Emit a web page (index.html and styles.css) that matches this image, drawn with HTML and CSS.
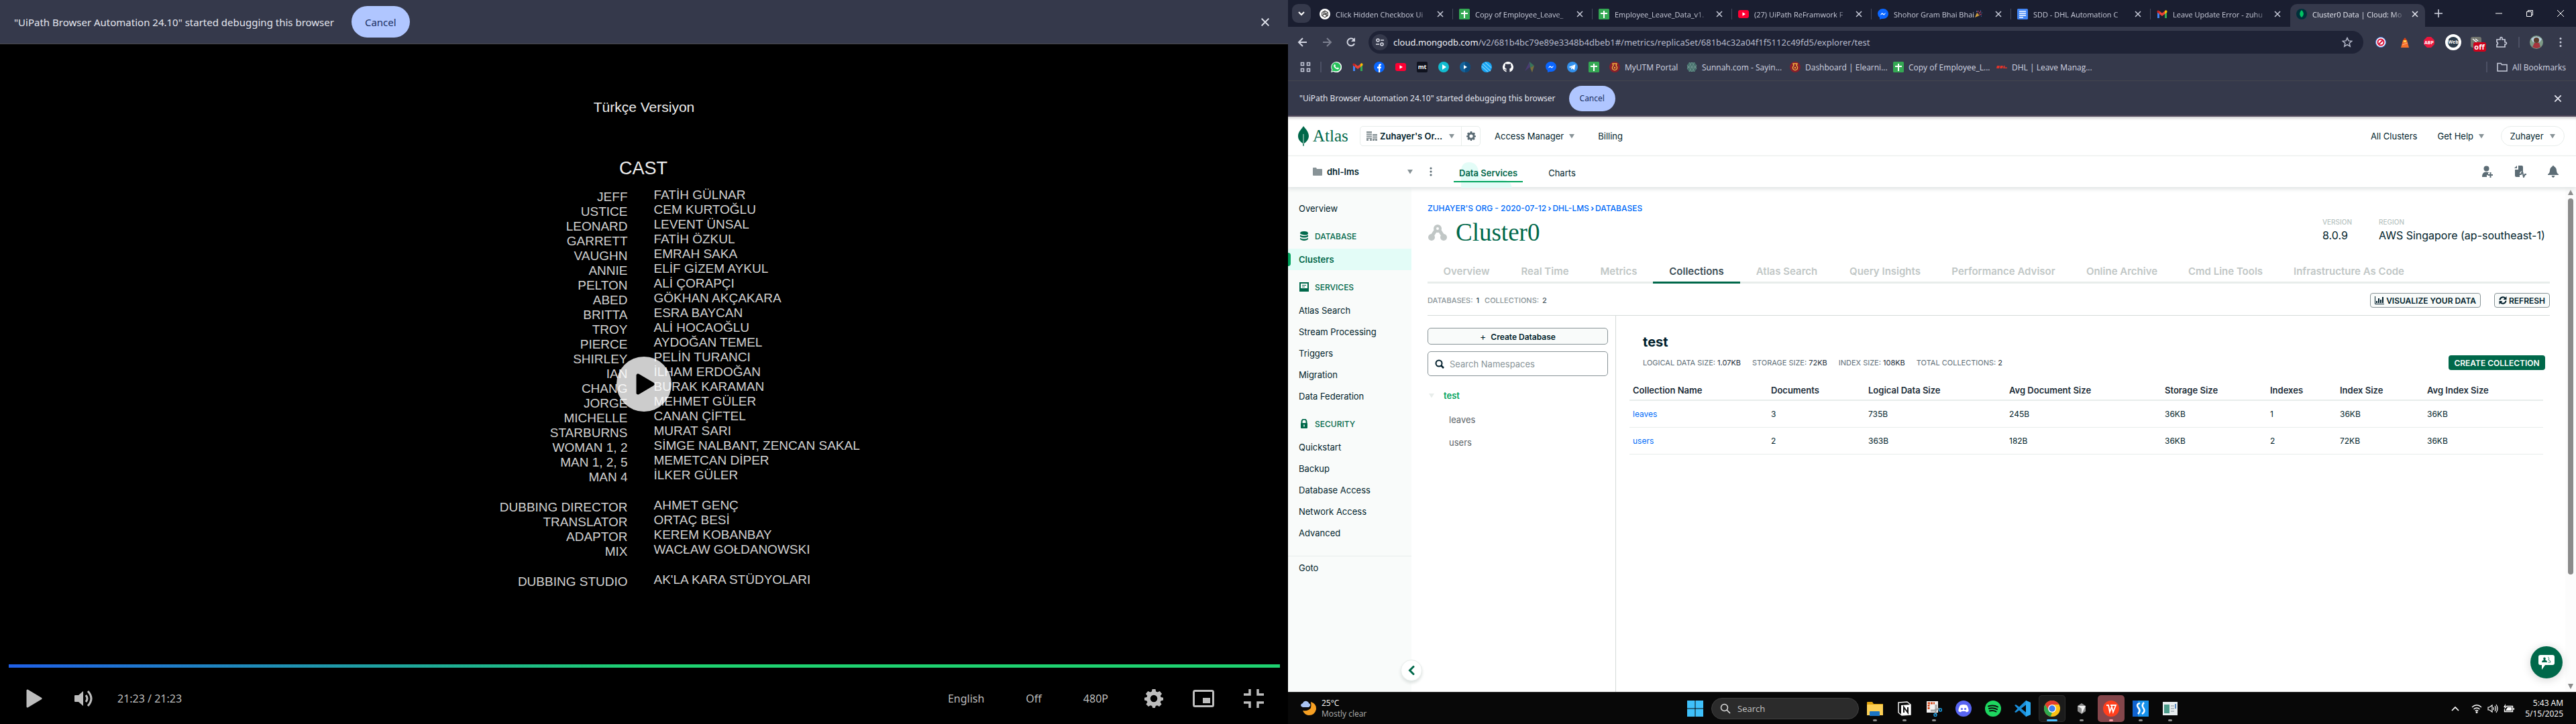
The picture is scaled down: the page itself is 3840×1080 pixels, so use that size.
FILE: index.html
```html
<!DOCTYPE html>
<html lang="en">
<head>
<meta charset="utf-8">
<title>Cluster0 Data | Cloud: MongoDB Cloud</title>
<link rel="stylesheet" href="styles.css">
</head>
<body>
<svg class="defs" aria-hidden="true">
  <symbol id="x" viewBox="0 0 12 12"><path d="M2 2l8 8M10 2l-8 8" fill="none" stroke="currentColor" stroke-width="1.5"/></symbol>
  <symbol id="caret" viewBox="0 0 10 8"><path d="M1 1h8L5 7.500z" fill="currentColor"/></symbol>
  <symbol id="sheet" viewBox="0 0 16 16"><rect width="16" height="16" rx="1.500" fill="#34a853"/><path d="M8 3v11M3 7h10" stroke="#fff" stroke-width="2"/></symbol>
  <symbol id="yt" viewBox="0 0 16 16"><rect y="2" width="16" height="12" rx="3" fill="#ff0033"/><path d="M6.500 5.300v5.400L11 8z" fill="#fff"/></symbol>
  <symbol id="msg" viewBox="0 0 16 16"><path d="M8 0c4.500 0 8 3.200 8 7.600s-3.500 7.500-8 7.500l-2-.2L3 16v-2.700A7.400 7.400 0 010 7.600C0 3.200 3.500 0 8 0z" fill="#0a66ff"/><path d="M3.500 9.700L6.500 6l2.500 2 3.500-2.200-3 4L7 8z" fill="#fff"/></symbol>
  <symbol id="gmail" viewBox="0 0 16 16"><path d="M1 4v10h3V7z" fill="#4285f4"/><path d="M15 4v10h-3V7z" fill="#34a853"/><path d="M12 3.500V8l3.500-2.700V4c0-1.800-2-2.500-3.500-.9z" fill="#fbbc04"/><path d="M4 3.500L8 6.500l4-3V8l-4 3-4-3z" fill="#ea4335"/><path d="M.5 5.300L4 8V3.400C2.500 1.600.5 2.500.5 4z" fill="#c5221f"/></symbol>
  <symbol id="utm" viewBox="0 0 16 16"><circle cx="8" cy="8" r="8" fill="#8a1f2b"/><path d="M5 3h6L10 6a3.600 3.600 0 11-4 0z" fill="none" stroke="#f3b63f" stroke-width="1.400"/><circle cx="8" cy="9" r="1.200" fill="#f3b63f"/></symbol>
  <symbol id="gear" viewBox="0 0 16 16"><path fill-rule="evenodd" fill="currentColor" d="M6.600 0h2.800l.4 2 1.300.6L13 1.700 14.900 4 13.600 5.600l.4 1.200 2 .5v2.100l-2 .6-.5 1.200 1.100 1.700-2 2-1.700-1.100-1.300.5-.6 1.700H7l-.6-1.700-1.300-.5-1.700 1.100-2-2 1.100-1.700L2 10l-2-.6V7.300l2-.5.4-1.200L1.100 4 3 1.700l1.900.9L6.200 2zM8 5a3 3 0 100 6 3 3 0 000-6z"/></symbol>
</svg>

<main class="screens">
<section class="player" aria-label="Video player">
  <div class="infobar infobar-lg">
    <span>"UiPath Browser Automation 24.10" started debugging this browser</span>
    <button class="pill">Cancel</button>
    <button class="plain push" aria-label="Close"><svg width="16" height="16"><use href="#x"/></svg></button>
  </div>
  <div class="stage">
    <p class="version">Türkçe Versiyon</p>
    <h1 class="cast">CAST</h1>
    <div class="credits">
      <ul class="roles">
        <li>JEFF</li><li>USTICE</li><li>LEONARD</li><li>GARRETT</li><li>VAUGHN</li><li>ANNIE</li><li>PELTON</li><li>ABED</li><li>BRITTA</li><li>TROY</li><li>PIERCE</li><li>SHIRLEY</li><li>IAN</li><li>CHANG</li><li>JORGE</li><li>MICHELLE</li><li>STARBURNS</li><li>WOMAN 1, 2</li><li>MAN 1, 2, 5</li><li>MAN 4</li>
        <li class="break">DUBBING DIRECTOR</li><li>TRANSLATOR</li><li>ADAPTOR</li><li>MIX</li>
        <li class="break">DUBBING STUDIO</li>
      </ul>
      <ul>
        <li>FATİH GÜLNAR</li><li>CEM KURTOĞLU</li><li>LEVENT ÜNSAL</li><li>FATİH ÖZKUL</li><li>EMRAH SAKA</li><li>ELİF GİZEM AYKUL</li><li>ALİ ÇORAPÇI</li><li>GÖKHAN AKÇAKARA</li><li>ESRA BAYCAN</li><li>ALİ HOCAOĞLU</li><li>AYDOĞAN TEMEL</li><li>PELİN TURANCI</li><li>İLHAM ERDOĞAN</li><li>BURAK KARAMAN</li><li>MEHMET GÜLER</li><li>CANAN ÇİFTEL</li><li>MURAT SARI</li><li>SİMGE NALBANT, ZENCAN SAKAL</li><li>MEMETCAN DİPER</li><li>İLKER GÜLER</li>
        <li class="break">AHMET GENÇ</li><li>ORTAÇ BESİ</li><li>KEREM KOBANBAY</li><li>WACŁAW GOŁDANOWSKI</li>
        <li class="break">AK'LA KARA STÜDYOLARI</li>
      </ul>
    </div>
    <button class="bigplay" aria-label="Play"><svg width="28" height="32" viewBox="0 0 28 32"><path d="M3 3v26l22-13z" stroke="#000" stroke-width="5" stroke-linejoin="round"/></svg></button>
  </div>
  <input class="seek" type="range" min="0" max="100" value="100" aria-label="Seek">
  <div class="controls">
    <button class="plain" aria-label="Play"><svg width="24" height="28" viewBox="0 0 24 28"><path d="M2 2v24l20-12z" fill="currentColor" stroke="currentColor" stroke-width="3" stroke-linejoin="round"/></svg></button>
    <button class="plain" aria-label="Volume"><svg width="28" height="26" viewBox="0 0 28 26"><path d="M0 9v8q0 1 1 1h5l7 6V2L6 8H1Q0 8 0 9z" fill="currentColor"/><path d="M17 8q4 5 0 10M20 2q10 11 0 22" fill="none" stroke="currentColor" stroke-width="3"/></svg></button>
    <span>21:23 / 21:23</span>
    <div class="options push">
      <button class="plain">English</button>
      <button class="plain">Off</button>
      <button class="plain">480P</button>
      <button class="plain" aria-label="Settings"><svg width="28" height="28"><use href="#gear"/></svg></button>
      <button class="plain" aria-label="Picture in picture"><svg width="32" height="28" viewBox="0 0 32 28"><rect x="1.500" y="2.500" width="29" height="23" rx="2" fill="none" stroke="currentColor" stroke-width="3"/><path d="M15 13h11v8H15z" fill="currentColor"/></svg></button>
      <button class="plain" aria-label="Exit full screen"><svg width="30" height="28" viewBox="0 0 30 28"><path d="M9 0v8H0M21 0v8h9M9 28v-8H0M21 28v-8h9" fill="none" stroke="currentColor" stroke-width="3.500"/></svg></button>
    </div>
  </div>
</section>

<section class="desktop">
  <div class="tabstrip">
    <button class="tabsearch" aria-label="Search tabs"><svg width="12" height="12" viewBox="0 0 12 12"><path d="M2 4l4 4 4-4" fill="none" stroke="currentColor" stroke-width="2"/></svg></button>
    <div class="tab"><svg width="16" height="16" viewBox="0 0 16 16"><circle cx="8" cy="8" r="8" fill="#fff"/><path d="M8 3l4.300 2.500v5L8 13l-4.300-2.500v-5zM8 3v5l4.300 2.500M3.700 10.500L8 8M12.300 5.500L8 8M6 4v5M10 7v5" fill="none" stroke="#222"/></svg><span>Click Hidden Checkbox Ui</span><button class="plain" aria-label="Close tab"><svg width="12" height="12"><use href="#x"/></svg></button></div>
    <div class="tab"><svg width="16" height="16"><use href="#sheet"/></svg><span>Copy of Employee_Leave_</span><button class="plain" aria-label="Close tab"><svg width="12" height="12"><use href="#x"/></svg></button></div>
    <div class="tab"><svg width="16" height="16"><use href="#sheet"/></svg><span>Employee_Leave_Data_v1.</span><button class="plain" aria-label="Close tab"><svg width="12" height="12"><use href="#x"/></svg></button></div>
    <div class="tab"><svg width="16" height="16"><use href="#yt"/></svg><span>(27) UiPath ReFramwork F</span><button class="plain" aria-label="Close tab"><svg width="12" height="12"><use href="#x"/></svg></button></div>
    <div class="tab"><svg width="16" height="16"><use href="#msg"/></svg><span>Shohor Gram Bhai Bhai<svg class="party" width="12" height="12" viewBox="0 0 12 12"><path d="M1 11l3-7 4 4z" fill="#f4b740"/><path d="M5 3l1-2M7 5l3-3M8 7l3-1" stroke="#ef4f7a" stroke-width="1.500"/><path d="M9 1h1M11 4h1M3 2h1M10 9h1" stroke="#4aa8ff" stroke-width="1.500"/></svg></span><button class="plain" aria-label="Close tab"><svg width="12" height="12"><use href="#x"/></svg></button></div>
    <div class="tab"><svg width="16" height="16" viewBox="0 0 16 16"><rect width="16" height="16" rx="1.500" fill="#4285f4"/><path d="M3 4h10M3 7h10M3 10h10M3 13h6" stroke="#fff" stroke-width="1.500"/></svg><span>SDD - DHL Automation C</span><button class="plain" aria-label="Close tab"><svg width="12" height="12"><use href="#x"/></svg></button></div>
    <div class="tab"><svg width="16" height="16"><use href="#gmail"/></svg><span>Leave Update Error - zuhu</span><button class="plain" aria-label="Close tab"><svg width="12" height="12"><use href="#x"/></svg></button></div>
    <div class="tab active"><svg width="16" height="16" viewBox="0 0 16 16"><circle cx="8" cy="8" r="8" fill="#00303a"/><path d="M8 2c4 4 3.500 8 0 11-3.500-3-4-7 0-11z" fill="#00c463"/></svg><span>Cluster0 Data | Cloud: Mo</span><button class="plain" aria-label="Close tab"><svg width="12" height="12"><use href="#x"/></svg></button></div>
    <button class="plain newtab" aria-label="New tab"><svg width="14" height="14" viewBox="0 0 14 14"><path d="M7 1v12M1 7h12" stroke="currentColor" stroke-width="1.500"/></svg></button>
    <div class="winbtns push">
      <button class="plain" aria-label="Minimize"><svg width="12" height="12" viewBox="0 0 12 12"><path d="M1 6h10" stroke="#fff"/></svg></button>
      <button class="plain" aria-label="Restore"><svg width="12" height="12" viewBox="0 0 12 12"><path d="M1.500 3.500h7v7h-7zM3.500 3V1.500h7v7H9" fill="none" stroke="#fff"/></svg></button>
      <button class="plain" aria-label="Close"><svg width="12" height="12" viewBox="0 0 12 12"><path d="M1 1l10 10M11 1L1 11" stroke="#fff"/></svg></button>
    </div>
  </div>

  <div class="toolbar">
    <button class="plain" aria-label="Back"><svg width="16" height="16" viewBox="0 0 16 16"><path d="M14 8H2M8 2L2 8l6 6" fill="none" stroke="currentColor" stroke-width="2"/></svg></button>
    <button class="plain dim" aria-label="Forward"><svg width="16" height="16" viewBox="0 0 16 16"><path d="M2 8h12M8 2l6 6-6 6" fill="none" stroke="currentColor" stroke-width="2"/></svg></button>
    <button class="plain" aria-label="Reload"><svg width="16" height="16" viewBox="0 0 16 16"><path d="M13 10a5.500 5.500 0 11-1-6" fill="none" stroke="currentColor" stroke-width="2"/><path d="M14 1v6H8z" fill="currentColor"/></svg></button>
    <div class="omnibox">
      <button class="site" aria-label="View site information"><svg width="14" height="14" viewBox="0 0 14 14"><g fill="none" stroke="currentColor" stroke-width="1.500"><circle cx="4" cy="4" r="2"/><path d="M8 4h5M1 10h5"/><circle cx="10" cy="10" r="2"/></g></svg></button>
      <span><b>cloud.mongodb.com</b>/v2/681b4bc79e89e3348b4dbeb1#/metrics/replicaSet/681b4c32a04f1f5112c49fd5/explorer/test</span>
      <button class="plain push" aria-label="Bookmark this tab"><svg width="16" height="16" viewBox="0 0 16 16"><path d="M8 1.500l2 4.400 4.700.4-3.600 3.100 1.100 4.700L8 11.600l-4.200 2.500 1.100-4.700L1.300 6.300 6 5.900z" fill="none" stroke="currentColor" stroke-width="1.500"/></svg></button>
    </div>
    <div class="exts">
      <svg width="16" height="16" viewBox="0 0 16 16"><circle cx="8" cy="8" r="7.500" fill="#fff" stroke="#4b7bd8"/><circle cx="8" cy="8" r="4.500" fill="none" stroke="#d8123a" stroke-width="2"/><path d="M11 5l-6 6" stroke="#d8123a" stroke-width="2"/></svg>
      <svg width="16" height="16" viewBox="0 0 16 16"><path d="M5 5h6l3 11H2z" fill="#f4702a"/><path d="M5 5l3-4 3 4z" fill="#d84315"/><path d="M6 5h4v3H6z" fill="#ffd54f"/><path d="M4 12l8-3" stroke="#ffb48a"/></svg>
      <svg width="18" height="18" viewBox="0 0 18 18"><path d="M6 1h6l5 5v6l-5 5H6l-5-5V6z" fill="#e9173d"/><text x="9" y="12" text-anchor="middle" class="abp">ABP</text></svg>
      <svg width="24" height="24" viewBox="0 0 24 24"><circle cx="12" cy="12" r="12" fill="#fff"/><circle cx="12" cy="12" r="8" fill="#2c3b4a"/><text x="12" y="14" text-anchor="middle" class="abp">Web</text></svg>
      <svg class="badged" width="24" height="24" viewBox="0 0 24 24"><rect x="2" y="4" width="16" height="16" rx="3" fill="#74766f"/><path d="M5 7l6 5M9 7l4 3" stroke="#fff" stroke-width="1.500"/><rect x="6" y="12" width="19" height="14" rx="3" fill="#d0021b"/><text x="15" y="23" text-anchor="middle" class="off">off</text></svg>
      <svg width="18" height="18" viewBox="0 0 18 18"><path d="M2 5h5V3a1.500 1.500 0 013 0v2h4v4h1a1.500 1.500 0 010 3h-1v4H2v-3.500q3-1.500 0-4z" fill="none" stroke="#c7cbda" stroke-width="1.700"/></svg>
      <i class="vbar"></i>
      <svg width="20" height="20" viewBox="0 0 20 20"><circle cx="10" cy="10" r="10" fill="#7d9a86"/><path d="M2 5q8-7 16 0l-3 5H5z" fill="#b9cfe0"/><circle cx="10" cy="7" r="4" fill="#5a3b2c"/><path d="M4 17l3-6h7l2 6q-6 4-12 0z" fill="#a5353e"/></svg>
      <svg width="16" height="16" viewBox="0 0 16 16" fill="#c7cbda"><circle cx="8" cy="2.500" r="1.500"/><circle cx="8" cy="8" r="1.500"/><circle cx="8" cy="13.500" r="1.500"/></svg>
    </div>
  </div>

  <nav class="bookmarks">
    <svg width="16" height="16" viewBox="0 0 16 16"><path d="M1.500 1.500h4v4h-4zM10.500 1.500h4v4h-4zM1.500 10.500h4v4h-4zM10.500 10.500h4v4h-4z" fill="none" stroke="#c7cbda" stroke-width="1.500"/></svg>
    <i class="vbar"></i>
    <div class="marks">
      <svg width="16" height="16" viewBox="0 0 16 16"><path d="M0 16l1.200-4A8 8 0 114 14.900z" fill="#fff"/><path d="M1.500 14.500l.8-2.800a6.700 6.700 0 112.200 2z" fill="#25c25a"/><path d="M5 4.500c1-1 1.500 0 2 1.500l-.7 1q1 1.800 2.700 2.500l1-1 2 1c0 3-4 2-6 0s-2.500-4-1-5z" fill="#fff"/></svg>
      <svg width="16" height="16"><use href="#gmail"/></svg>
      <svg width="16" height="16" viewBox="0 0 16 16"><circle cx="8" cy="8" r="8" fill="#0866ff"/><path d="M7 16v-6H5V7.500h2V6c0-2.200 1.500-3 4-2.600v2c-1.500-.1-1.800.2-1.800 1v1.100H11L10.600 10H9.200v6z" fill="#fff"/></svg>
      <svg width="16" height="16"><use href="#yt"/></svg>
      <svg width="16" height="16" viewBox="0 0 16 16"><rect width="16" height="16" rx="2" fill="#10131f"/><text x="8" y="11" text-anchor="middle" class="mt">mt</text></svg>
      <svg width="16" height="16" viewBox="0 0 16 16"><circle cx="8" cy="8" r="8" fill="#12bcd0"/><path d="M6 4v8l6-4z" fill="#fff"/></svg>
      <svg width="16" height="16" viewBox="0 0 16 16"><circle cx="8" cy="8" r="8" fill="#14639b"/><path d="M8 0a8 8 0 010 16z" fill="#0b4b7e"/><path d="M6 5v6l5-3z" fill="#fff"/></svg>
      <svg width="16" height="16" viewBox="0 0 16 16"><circle cx="8" cy="8" r="8" fill="#16a4f4"/><path d="M2 3l12 11M1 7l9 8M6 1l9 8" stroke="#7fd0fa" stroke-width="1.200"/></svg>
      <svg width="16" height="16" viewBox="0 0 16 16"><path d="M8 0a8 8 0 00-2.500 15.600v-2.700C3 13.300 3 11.500 2 11c1.500-.3 2 1.300 3.500 1 .1-.5.3-.9.500-1.200C3 10.300 2.500 7 4 5.100c-.2-.5-.2-1.300.1-2.100.8 0 1.500.4 2.100.8a8 8 0 013.600 0c.7-.5 1.300-.8 2.100-.8.300.8.300 1.600.1 2.100C13.500 7 13 10.300 10 10.800c.400.400.5 1 .5 1.700v3.100A8 8 0 008 0z" fill="#fff"/></svg>
      <svg width="16" height="16" viewBox="0 0 16 16"><path d="M1 14L8 0l1 8z" fill="#4a3a72"/><path d="M8 0l7 6-6 3z" fill="#39745a"/><path d="M15 6l-3 10-3-7z" fill="#77703c"/></svg>
      <svg width="16" height="16"><use href="#msg"/></svg>
      <svg width="16" height="16" viewBox="0 0 16 16"><circle cx="8" cy="8" r="8" fill="#3390ec"/><path d="M2.500 8L12.500 4 11 12.500 7.500 10 6 12V9l4-3-5 3z" fill="#fff"/></svg>
      <svg width="16" height="16"><use href="#sheet"/></svg>
    </div>
    <div class="named">
      <a href="#"><svg width="16" height="16"><use href="#utm"/></svg>MyUTM Portal</a>
      <a href="#"><svg width="16" height="16" viewBox="0 0 16 16"><path d="M4 1h8l3 4v6l-3 4H4l-3-4V5z" fill="#456f6b"/><path d="M4 1l8 14M12 1L4 15M1 8h14M1 5l7 10 7-10M1 11L8 1l7 10" stroke="#83a39d" fill="none" stroke-width=".6"/></svg>Sunnah.com - Sayin...</a>
      <a href="#"><svg width="16" height="16"><use href="#utm"/></svg>Dashboard | Elearni...</a>
      <a href="#"><svg width="16" height="16"><use href="#sheet"/></svg>Copy of Employee_L...</a>
      <a href="#"><svg width="16" height="16" viewBox="0 0 16 16"><path d="M1 6h4l-1 4H0zM6 6h4l-1 4H5zM11 6h2l-1 2.500h4V10h-6z" fill="#e0342b"/></svg>DHL | Leave Manag...</a>
    </div>
    <i class="vbar push"></i>
    <a class="all" href="#"><svg width="16" height="16" viewBox="0 0 16 16"><path d="M1 2.500h5l1.500 2H15v9.500H1z" fill="none" stroke="#c7cbda" stroke-width="1.500"/></svg>All Bookmarks</a>
  </nav>

  <div class="infobar">
    <span>"UiPath Browser Automation 24.10" started debugging this browser</span>
    <button class="pill">Cancel</button>
    <button class="plain push" aria-label="Close"><svg width="14" height="14"><use href="#x"/></svg></button>
  </div>

  <div class="atlas">
    <header class="top">
      <a class="logo" href="#"><svg width="16" height="30" viewBox="0 0 16 30"><path d="M8 0c2 3 8 8 8 15 0 5-4 9-7 11l-.5 4h-1L7 26C3 23 0 20 0 15 0 8 6 4 8 0z" fill="#00684a"/><path d="M8 12v15" stroke="#fff" stroke-width=".8"/></svg>Atlas</a>
      <div class="org">
        <button class="orgname"><svg width="16" height="14" viewBox="0 0 16 14"><path d="M0 0h8v14H5v-3H3v3H0zM9 4h7v10h-3v-2h-1v2H9z" fill="#889397"/><path d="M0 3h8M0 6h8M0 9h8M9 7h7M9 10h7" stroke="#fff"/></svg><b>Zuhayer's Or...</b><svg class="car" width="10" height="8"><use href="#caret"/></svg></button>
        <button class="orgset" aria-label="Organization settings"><svg width="14" height="14"><use href="#gear"/></svg></button>
      </div>
      <button class="plain drop">Access Manager<svg class="car" width="10" height="8"><use href="#caret"/></svg></button>
      <a href="#">Billing</a>
      <div class="account push">
        <a href="#">All Clusters</a>
        <button class="plain drop">Get Help<svg class="car" width="10" height="8"><use href="#caret"/></svg></button>
        <button class="user">Zuhayer<svg class="car" width="10" height="8"><use href="#caret"/></svg></button>
      </div>
    </header>
    <div class="project">
      <button class="plain projname"><svg width="14" height="12" viewBox="0 0 14 12"><path d="M0 1q0-1 1-1h4l1 2h7q1 0 1 1v8q0 1-1 1H1q-1 0-1-1z" fill="#889397"/></svg><b>dhl-lms</b><svg class="car push" width="10" height="8"><use href="#caret"/></svg></button>
      <button class="plain kebab" aria-label="Project options"><svg width="4" height="14" viewBox="0 0 4 14" fill="#5c6c75"><circle cx="2" cy="2" r="1.600"/><circle cx="2" cy="7" r="1.600"/><circle cx="2" cy="12" r="1.600"/></svg></button>
      <a class="svc on" href="#"><svg class="blob" width="76" height="38" viewBox="0 0 76 38"><path d="M0 38V12Q1 0 12 0q12 0 14 14 2 12 16 12h20q12 1 14 12z" fill="#e3fcf7"/></svg><span>Data Services</span></a>
      <a class="svc" href="#">Charts</a>
      <div class="acts push">
        <button class="plain" aria-label="Invite"><svg width="16" height="18" viewBox="0 0 16 18" fill="#5c6c75"><circle cx="6.500" cy="4.500" r="4"/><path d="M0 17q0-8 6.500-7.500 3 0 4.500 1.500H9v3H7v3z"/><path d="M12.500 10v8M8.500 14h7.500" stroke="#5c6c75" stroke-width="2"/></svg></button>
        <button class="plain" aria-label="Activity"><svg width="18" height="18" viewBox="0 0 18 18"><path d="M6 0h5q2 0 2 2v6q-5 0-5 5v4H3q-2 0-2-2V6h5z" fill="#5c6c75"/><path d="M4 0v4H0z" fill="#5c6c75"/><path d="M8 13h2l2-4 2 8 2-4h2" stroke="#5c6c75" stroke-width="2" fill="none"/></svg></button>
        <button class="plain" aria-label="Notifications"><svg width="16" height="18" viewBox="0 0 16 18"><path d="M8 0q1.500 0 1.500 1.500Q13 3 13 8q0 3 3 5v1H0v-1q3-2 3-5 0-5 3.500-6.500Q6.500 0 8 0zM5.500 15h5q-1 3-2.500 3t-2.500-3z" fill="#5c6c75"/></svg></button>
      </div>
    </div>

    <div class="body">
      <nav class="side">
        <a href="#">Overview</a>
        <h3><svg width="14" height="14" viewBox="0 0 14 14" fill="#00684a"><path d="M1 3q0-3 6-3t6 3-6 2.500S1 4.500 1 3zM1 5.500q6 3 12 0V8q-6 3-12 0zM1 10q6 3 12 0v2q-6 4-12 0z"/></svg>DATABASE</h3>
        <a class="on" href="#">Clusters</a>
        <h3><svg width="14" height="14" viewBox="0 0 14 14"><path d="M1 1h12v9H1z" fill="none" stroke="#00684a" stroke-width="2"/><path d="M0 11h14v3H0zM4 4h6v1H4zM4 6.500h4v1H4z" fill="#00684a"/></svg>SERVICES</h3>
        <a href="#">Atlas Search</a>
        <a href="#">Stream Processing</a>
        <a href="#">Triggers</a>
        <a href="#">Migration</a>
        <a href="#">Data Federation</a>
        <h3><svg width="14" height="14" viewBox="0 0 14 14"><path d="M3.500 7V4a3.500 3.500 0 017 0v3" fill="none" stroke="#00684a" stroke-width="2"/><rect x="2" y="6" width="10" height="8" rx="1" fill="#00684a"/><path d="M7 8.500v3" stroke="#fff" stroke-width="1.500"/></svg>SECURITY</h3>
        <a href="#">Quickstart</a>
        <a href="#">Backup</a>
        <a href="#">Database Access</a>
        <a href="#">Network Access</a>
        <a href="#">Advanced</a>
        <hr>
        <a href="#">Goto</a>
        <button class="collapse" aria-label="Collapse navigation"><svg width="10" height="14" viewBox="0 0 10 14"><path d="M8 1.500L2.500 7 8 12.500" fill="none" stroke="#00684a" stroke-width="3" stroke-linecap="round"/></svg></button>
      </nav>

      <div class="content">
        <div class="crumbs"><a href="#">ZUHAYER'S ORG - 2020-07-12</a><a href="#">DHL-LMS</a><a href="#">DATABASES</a></div>
        <div class="head">
          <svg width="30" height="24" viewBox="0 0 30 24" fill="none" stroke="#c1c7c6"><circle cx="15" cy="6" r="4" stroke-width="4"/><path d="M12 9L6 18M18 9l6 9" stroke-width="5"/><circle cx="6" cy="19" r="5" fill="#c1c7c6" stroke="none"/><circle cx="24" cy="19" r="5" fill="#c1c7c6" stroke="none"/></svg>
          <h2>Cluster0</h2>
          <dl class="ver push"><dt>VERSION</dt><dd>8.0.9</dd></dl>
          <dl class="reg"><dt>REGION</dt><dd>AWS Singapore (ap-southeast-1)</dd></dl>
        </div>
        <nav class="tabs">
          <a href="#">Overview</a><a href="#">Real Time</a><a href="#">Metrics</a><a class="on" href="#">Collections</a><a href="#">Atlas Search</a><a href="#">Query Insights</a><a href="#">Performance Advisor</a><a href="#">Online Archive</a><a href="#">Cmd Line Tools</a><a href="#">Infrastructure As Code</a>
        </nav>
        <div class="summary">
          <span>DATABASES: <b>1</b></span><span>COLLECTIONS: <b>2</b></span>
          <button class="btn push"><svg width="14" height="12" viewBox="0 0 14 12"><path d="M.5 0v11.500H14" fill="none" stroke="#001e2b"/><path d="M3 10V7M6 10V3M9 10V5M12 10V1" stroke="#001e2b" stroke-width="2"/></svg>VISUALIZE YOUR DATA</button>
          <button class="btn"><svg width="12" height="12" viewBox="0 0 12 12"><path d="M1.500 5.500A4.500 4.500 0 019.500 3M10.500 6.500A4.500 4.500 0 012.500 9" fill="none" stroke="#001e2b" stroke-width="2"/><path d="M11.500 0v5h-5zM.5 12V7h5z" fill="#001e2b"/></svg>REFRESH</button>
        </div>
        <div class="split">
          <aside class="dbs">
            <button class="create"><span>+</span> Create Database</button>
            <label class="search"><svg width="16" height="14" viewBox="0 0 16 14"><circle cx="7" cy="6" r="4.500" fill="none" stroke="#001e2b" stroke-width="2"/><path d="M10 9l4 4" stroke="#001e2b" stroke-width="2.500"/></svg><input type="text" placeholder="Search Namespaces" aria-label="Search Namespaces"></label>
            <a class="db" href="#"><svg width="12" height="8"><use href="#caret"/></svg>test</a>
            <a class="coll" href="#">leaves</a>
            <a class="coll" href="#">users</a>
          </aside>
          <section class="detail">
            <h2>test</h2>
            <div class="stats">
              <span>LOGICAL DATA SIZE: <b>1.07KB</b></span><span>STORAGE SIZE: <b>72KB</b></span><span>INDEX SIZE: <b>108KB</b></span><span>TOTAL COLLECTIONS: <b>2</b></span>
              <button class="primary push">CREATE COLLECTION</button>
            </div>
            <table>
              <colgroup><col class="c1"><col class="c2"><col class="c3"><col class="c4"><col class="c5"><col class="c6"><col class="c7"><col class="c8"></colgroup>
              <thead><tr><th>Collection Name</th><th>Documents</th><th>Logical Data Size</th><th>Avg Document Size</th><th>Storage Size</th><th>Indexes</th><th>Index Size</th><th>Avg Index Size</th></tr></thead>
              <tbody>
                <tr><td><a href="#">leaves</a></td><td>3</td><td>735B</td><td>245B</td><td>36KB</td><td>1</td><td>36KB</td><td>36KB</td></tr>
                <tr><td><a href="#">users</a></td><td>2</td><td>363B</td><td>182B</td><td>36KB</td><td>2</td><td>72KB</td><td>36KB</td></tr>
              </tbody>
            </table>
          </section>
        </div>
      </div>
      <div class="scroll"><svg width="8" height="8" viewBox="0 0 8 8"><path d="M0 8h8L4 0z" fill="#8b8b8b"/></svg><i></i><svg width="8" height="8" viewBox="0 0 8 8"><path d="M0 0h8L4 8z" fill="#8b8b8b"/></svg></div>
      <button class="chat" aria-label="Chat"><svg width="24" height="22" viewBox="0 0 24 22"><path d="M3 0h18q3 0 3 3v9q0 3-3 3H10l-5 7v-7H3q-3 0-3-3V3q0-3 3-3z" fill="#fff"/><path d="M5 11q0-3 3-3.500Q6 4 9 3.500 12 4 10 7.500q3 .5 3 3.500z" fill="#00684a"/><path d="M14.500 11H18q0-3-3-3.500 2-3.500-1-4" fill="none" stroke="#00684a" stroke-width=".8"/></svg></button>
    </div>
  </div>

  <footer class="taskbar">
    <div class="weather"><svg width="24" height="24" viewBox="0 0 24 24"><path d="M15 2q9 3 8 11-2 9-11 9-6 0-9-7 9 1 12-4 1-4 0-9z" fill="#f7a023"/><path d="M3 10q-3-1-3-3t3-3q2-4 6-3 3 1 3 3 3 1 2 4l-2 2z" fill="#a9c4f2"/></svg><p>25°C<br><span>Mostly clear</span></p></div>
    <div class="dock">
      <button class="plain" aria-label="Start"><svg width="24" height="24" viewBox="0 0 24 24"><path d="M0 0h11.500v11.500H0zM12.500 0H24v11.500H12.500zM0 12.500h11.500V24H0zM12.500 12.500H24V24H12.500z" fill="#3fc0fa"/></svg></button>
      <label class="find"><svg width="16" height="16" viewBox="0 0 16 16"><circle cx="6.500" cy="6.500" r="5" fill="none" stroke="#ddd" stroke-width="1.500"/><path d="M10 10l5 5" stroke="#ddd" stroke-width="1.700"/></svg><input type="text" placeholder="Search" aria-label="Search"></label>
      <div class="apps">
        <button class="run" aria-label="File Explorer"><svg viewBox="0 0 24 24"><path d="M0 3q0-1 1-1h7l2 3h14v17H0z" fill="#e0a30f"/><path d="M0 6h24v16H0z" fill="#fdd055"/><path d="M4 23v-6q0-1 1-1h13q1 0 1 1v6z" fill="#1b74c4"/></svg></button>
        <button class="run" aria-label="Notion"><svg viewBox="0 0 24 24"><path d="M3 3l13-1 5 4v15l-13 1-5-4z" fill="#0b0b0b" stroke="#eee" stroke-width="1.500"/><path d="M7 7l14-1v15L7 22z" fill="#fff"/><path d="M11 18v-8l6 8v-8" stroke="#111" stroke-width="2" fill="none"/></svg></button>
        <button class="run" aria-label="Snipping Tool"><svg viewBox="0 0 24 24"><path d="M1 1h17v17H1z" fill="#f3f3f3"/><path d="M4 13V4h9" stroke="#d64a1c" stroke-width="3" stroke-dasharray="3 1" fill="none"/><path d="M7 15h8V6" stroke="#aaa" stroke-width="3" fill="none"/><path d="M13 14l7-2M14 15l1 6" stroke="#999" stroke-width="2"/><circle cx="21.500" cy="14" r="2" fill="none" stroke="#1aa0e8" stroke-width="1.500"/><circle cx="14" cy="21.500" r="2" fill="none" stroke="#1aa0e8" stroke-width="1.500"/></svg></button>
        <button aria-label="Discord"><svg viewBox="0 0 24 24"><circle cx="12" cy="12" r="12" fill="#5865f2"/><path d="M7 7q5-2 10 0 3 5 2.500 9-3 2-4 1l-.5-1h-6l-.5 1q-1 1-4-1Q4 12 7 7z" fill="#fff"/><circle cx="9.500" cy="12.500" r="1.600" fill="#5865f2"/><circle cx="14.500" cy="12.500" r="1.600" fill="#5865f2"/></svg></button>
        <button aria-label="Spotify"><svg viewBox="0 0 24 24"><circle cx="12" cy="12" r="12" fill="#1ed760"/><path d="M5 8.500q8-2.500 14 1M6 12q6-2 12 1.200M7 15.500q5-1.500 9.500 1" fill="none" stroke="#0a0a0a" stroke-width="2" stroke-linecap="round"/></svg></button>
        <button aria-label="Visual Studio Code"><svg viewBox="0 0 24 24"><path d="M17 0L7 9.500 2 6 0 7l4.500 5L0 17l2 1 5-3.500L17 24l7-3V3zM17 6.500v11L10 12z" fill="#1a8fdb" fill-rule="evenodd"/><path d="M17 0l7 3v18l-7 3z" fill="#2aa9f1"/></svg></button>
        <button class="run cur" aria-label="Chrome"><svg viewBox="0 0 24 24"><circle cx="12" cy="12" r="12" fill="#fbc116"/><path d="M1.600 6A12 12 0 0122.400 6H12L7 15z" fill="#e33b2e"/><path d="M1.600 6L7 15l5 3-2 5.800A12 12 0 011.600 6z" fill="#2da94f"/><circle cx="12" cy="12" r="6" fill="#fff"/><circle cx="12" cy="12" r="4.700" fill="#3b7ded"/></svg></button>
        <button class="run" aria-label="Cursor"><svg viewBox="0 0 24 24"><path d="M12 4l6 4v8l-6 4-6-4V8z" fill="#8d8d8d"/><path d="M6 8h12l-6 12v-8z" fill="#f2f2f2"/></svg></button>
        <button class="run alert" aria-label="WPS Office"><svg viewBox="0 0 24 24"><circle cx="12" cy="12" r="12" fill="#ff3f1d"/><path d="M5 7h3l2 10 3-8 2 8 4-10h-8" fill="none" stroke="#fff" stroke-width="1.800"/></svg></button>
        <button class="run" aria-label="UiPath Studio"><svg viewBox="0 0 24 24"><path d="M0 0h24v24H0z" fill="#1590ea"/><path d="M0 0h8v24H0z" fill="#0f62cf"/><path d="M11 4q-6 1-3 6 5 5 0 10M17 3q-4 4-1 8 4 5-2 9" fill="none" stroke="#fff" stroke-width="2.500"/></svg></button>
        <button class="run" aria-label="UiPath Assistant"><svg viewBox="0 0 24 24"><path d="M1 2h22v20H1z" fill="#e9eef0"/><path d="M3 6h8v13H3z" fill="#4b9b8a"/><path d="M13 8h5M13 12h5M13 16h5" stroke="#b8bfc4" stroke-width="2"/><path d="M20 5v7" stroke="#2d6ab0" stroke-width="1.500"/></svg></button>
      </div>
    </div>
    <div class="tray">
      <svg width="12" height="8" viewBox="0 0 12 8"><path d="M1 7l5-5 5 5" fill="none" stroke="#fff" stroke-width="1.700"/></svg>
      <div class="net">
        <svg width="16" height="14" viewBox="0 0 16 14" fill="none" stroke="#fff" stroke-width="1.400"><path d="M1 5q7-6.500 14 0M3.500 8q4.500-4 9 0M5.800 10.500q2.200-2 4.400 0"/><circle cx="8" cy="12.500" r=".8"/></svg>
        <svg width="16" height="14" viewBox="0 0 16 14" fill="none" stroke="#fff" stroke-width="1.200"><path d="M1 5h2l4-3v10L3 9H1zM9 5q1 2 0 4M11 3q3 4 0 8M13 1q4 6 0 12"/></svg>
        <svg width="16" height="14" viewBox="0 0 16 14"><path d="M4 3.500h9.500v8H1.500V8" fill="none" stroke="#fff" stroke-width="1.400"/><path d="M6 5h6v5H3zM14.500 6H16v3h-1.500zM3 0L0 5h2L1 8l4-4H3z" fill="#fff"/></svg>
      </div>
      <p class="clock">5:43 AM<br>5/15/2025</p>
    </div>
  </footer>
</section>
</main>
</body>
</html>
```
FILE: styles.css
```css
* { box-sizing: border-box; }
body { margin: 0; background: #000; font-family: "Open Sans", "Noto Sans", sans-serif; font-size: 12px; }
button, input { font: inherit; color: inherit; }
button { padding: 0; border: 0; background: none; }
a { color: inherit; text-decoration: none; }
h1, h2, h3, p, ul, dl, dd { margin: 0; padding: 0; }
ul { list-style: none; }
svg { display: block; flex: none; }
.defs { position: absolute; width: 0; height: 0; }
.push { margin-left: auto; }
.plain { display: flex; align-items: center; justify-content: center; }

.screens { display: grid; grid-template-columns: 1fr 1fr; min-height: 100vh; }

/* Infobar */
.infobar { display: flex; align-items: center; gap: 20px; height: 54px; padding: 0 20px 0 17px; background: #35394b; color: #e3e5ee; border-top: 1px solid #45474f; border-bottom: 2px solid #50475a; font-family: "Noto Sans", sans-serif; white-space: nowrap; }
.pill { height: 38px; padding: 0 16px; border-radius: 19px; background: #b0c6ff; color: #1a2f60; }
.infobar-lg { height: 66px; padding: 0 26px 0 21px; gap: 26px; font-size: 15px; border-top: 0; border-bottom: 1px solid #4a4a4e; }
.infobar-lg .pill { height: 47px; padding: 0 20px; border-radius: 24px; }

/* Video player */
.player { display: flex; flex-direction: column; background: #000; color: #bdbdbd; }
.stage { position: relative; flex: 1; padding: 80px 10px 0 0; font-family: "Liberation Sans", Arial, sans-serif; color: #d2d2d2; }
.version { padding-left: 10px; font-size: 21px; line-height: 28px; text-align: center; color: #eee; }
.cast { padding-left: 8px; margin-top: 62px; font-size: 27px; font-weight: 400; line-height: 30px; text-align: center; color: #eee; }
.credits { display: grid; grid-template-columns: 1fr 1fr; gap: 39px; margin-top: 14px; font-size: 19px; line-height: 22px; }
.roles { padding-top: 3px; text-align: right; }
.break { margin-top: 23px; }
.bigplay { position: absolute; top: 507px; left: 50%; display: grid; place-items: center; width: 82px; height: 82px; margin-left: -41px; padding-left: 4px; transform: translateY(-50%); border-radius: 50%; background: rgba(255, 255, 255, .8); }
.seek { appearance: none; height: 5px; margin: 0 12px 0 13px; background: linear-gradient(90deg, #2060e8, #1fa39e 30%, #1ed270 50%); }
.seek::-webkit-slider-thumb { appearance: none; width: 0; height: 5px; }
.controls { display: flex; align-items: center; height: 84px; padding: 8px 36px 0 39px; font-family: "Noto Sans", sans-serif; font-size: 16px; }
.controls > button { margin-right: 48px; }
.controls > button + button { margin-right: 36px; }
.options { display: flex; align-items: center; gap: 44px; }
.options button:nth-child(-n+2) { margin-right: 18px; }
.options button:nth-child(3) { margin-right: 10px; }

/* Browser chrome */
.desktop { display: flex; flex-direction: column; min-width: 0; background: #35394b; color: #d3d6e2; }
.tabstrip { display: flex; align-items: center; height: 40px; padding-left: 6px; background: #1a1e30; font-size: 11px; }
.tabsearch { display: grid; place-items: center; flex: none; width: 28px; height: 28px; margin-right: 4px; border-radius: 9px; background: #35394b; color: #fff; }
.tab { display: flex; align-items: center; flex: 0 1 208px; min-width: 0; gap: 8px; height: 34px; padding: 0 13px 0 9px; position: relative; margin-top: 2px; color: #c9ccda; }
.tab span { display: flex; align-items: center; flex: 1; overflow: hidden; white-space: nowrap; mask-image: linear-gradient(90deg, #000 85%, transparent); }
.tab::after { content: ""; position: absolute; right: 0; top: 9px; width: 1px; height: 16px; background: #45495c; }
.tab.active { flex-basis: 201px; padding-right: 9px; margin-top: 6px; padding-bottom: 4px; border-radius: 10px 10px 0 0; background: #35394b; color: #e8eaf2; }
.tab.active::after, .tab:nth-last-child(4)::after { content: none; }
.newtab { width: 40px; color: #d3d6e2; }
.winbtns { display: flex; }
.winbtns button { width: 46px; height: 40px; }
.toolbar { display: flex; align-items: center; height: 46px; padding: 0 15px 0 14px; gap: 20px; }
.dim { opacity: .45; }
.omnibox { display: flex; align-items: center; flex: 1; height: 34px; margin: 0 -2px 0 -2px; padding: 0 16px 0 5px; border-radius: 17px; background: #1f2336; font-family: "Noto Sans", sans-serif; font-size: 13px; color: #b6bacb; }
.omnibox b { font-weight: 400; color: #f0f1f6; }
.site { display: grid; place-items: center; width: 24px; height: 24px; margin-right: 8px; border-radius: 12px; background: #35394b; color: #e0e2ec; }
.exts { display: grid; grid-template-columns: repeat(6, 36px) 16px 36px 36px; justify-items: center; align-items: center; margin-right: -10px; margin-left: -10px; }
.badged { overflow: visible; }
.vbar { width: 2px; height: 16px; background: #4c5064; }
.abp { font: 700 7px "Open Sans", sans-serif; fill: #fff; }
.off { font: 700 11px "Open Sans", sans-serif; fill: #fff; }
.mt { font: 700 9px "Open Sans", sans-serif; fill: #fff; }
.bookmarks { display: flex; align-items: center; height: 34px; padding: 0 15px 6px 18px; white-space: nowrap; }
.bookmarks > .vbar { margin-right: 14px; }
.bookmarks > .vbar:not(.push) { margin-left: 14px; }
.marks { display: flex; gap: 16px; margin-right: 15px; }
.named { display: grid; grid-template-columns: 115px 154px 154px 154px auto; }
.named a, .all { display: flex; align-items: center; gap: 7px; }

/* Atlas */
.atlas { display: flex; flex-direction: column; flex: 1; overflow: clip; background: #fff; color: #001e2b; font-family: Inter, "Liberation Sans", sans-serif; font-size: 13px; }
.car { color: #889397; }
.top { display: flex; align-items: center; height: 59px; padding: 0 17px 0 15px; border-bottom: 1px solid #e8edeb; box-shadow: inset 0 5px 4px -3px #c4c4c6; white-space: nowrap; }
.logo { display: flex; align-items: center; gap: 6px; width: 92px; font: 25px "Liberation Serif", serif; color: #00684a; }
.org { display: flex; width: 180px; height: 30px; border: 1px solid #e8edeb; border-radius: 5px; margin-right: 21px; }
.org b, .project b { font-weight: 600; }
.orgname { display: flex; align-items: center; flex: 1; gap: 4px; padding-left: 9px; }
.orgname .car { margin-left: 5px; }
.orgset { display: grid; place-items: center; width: 28px; border-left: 1px solid #e8edeb; color: #5c6c75; }
.drop { gap: 7px; margin-right: 34px; }
.account { display: flex; align-items: center; }
.account > a { margin-right: 30px; }
.account .drop { margin-right: 24px; }
.user { display: flex; align-items: center; justify-content: center; gap: 8px; width: 95px; height: 30px; border: 1px solid #e8edeb; border-radius: 15px; }
.project { display: flex; align-items: center; height: 46px; padding: 0 26px 0 37px; position: relative; z-index: 1; background: #fff; box-shadow: 0 3px 6px #dfe3e3; }
.projname { width: 150px; gap: 7px; }
.kebab { width: 52px; }
.svc { position: relative; height: 37px; margin-top: 9px; padding: 6px 8px 0; line-height: 20px; }
.svc + .svc { margin-left: 30px; }
.svc.on { margin-left: 8px; font-weight: 600; color: #00684a; }
.svc span { position: relative; display: block; height: 24px; margin: 0 -8px; padding: 0 8px; border-bottom: 2px solid #00a35c; }
.blob { position: absolute; left: 11px; top: 0; }
.acts { display: flex; gap: 32px; }
.body { display: flex; flex: 1; position: relative; }
.side { position: relative; flex: none; width: 184px; padding-top: 16px; background: #f9fbfa; }
.side a { display: block; height: 32px; padding-left: 16px; line-height: 32px; }
.side h3 { display: flex; align-items: center; gap: 9px; height: 44px; padding: 6px 0 0 17px; font-size: 12px; font-weight: 500; color: #00684a; }
.side .on { position: relative; background: #e3fcf7; color: #00684a; font-weight: 600; }
.side .on::before { content: ""; position: absolute; left: 0; top: 6px; width: 4px; height: 20px; border-radius: 0 6px 6px 0; background: #00a35c; }
.side hr { margin: 18px 0 1px; border: 0; border-top: 1px solid #e8edeb; }
.collapse { position: absolute; right: -16px; bottom: 16px; display: grid; place-items: center; width: 32px; height: 32px; border: 1px solid #e8edeb; border-radius: 16px; background: #fff; box-shadow: 0 3px 4px #dde2e0; z-index: 1; }
.content { display: flex; flex-direction: column; flex: 1; min-width: 0; padding: 20px 23px 0 24px; }
.crumbs { font-size: 12px; font-weight: 500; line-height: 24px; color: #016bf8; }
.crumbs a + a::before { content: "›"; margin: 0 2px; font-weight: 700; }
.head { display: flex; height: 67px; padding-top: 12px; gap: 12px; }
.head h2 { font: 37px/30px "Liberation Serif", serif; color: #00684a; margin-top: -3px; }
.head dl { margin-top: -12px; }
.ver { width: 72px; }
.reg { width: 255px; }
.head dt { font-size: 10px; line-height: 16px; color: #b8c4c2; font-weight: 500; }
.head dd { font-size: 16px; line-height: 24px; white-space: nowrap; }
.tabs { display: grid; grid-template-columns: 116px 118px 102px 130px 139px 154px 199px 154px 155px 213px; height: 33px; box-shadow: inset 0 -3px #e8edeb; line-height: 30px; font-size: 15px; font-weight: 600; text-align: center; color: #c1c7c6; white-space: nowrap; }
.tabs .on { color: #3d4f58; border-bottom: 3px solid #00684a; }
.summary { display: flex; align-items: center; height: 48px; padding-top: 3px; gap: 8px; border-bottom: 1px solid #d5dad9; font-size: 11px; font-weight: 500; color: #889397; }
.summary b { color: #3d4f58; font-weight: 500; margin-left: 2px; }
.btn { display: flex; align-items: center; justify-content: center; gap: 3px; height: 22px; padding: 0 6px; border: 1px solid #889397; border-radius: 4px; background: #f9fbfa; color: #001e2b; font-size: 12px; font-weight: 600; }
.btn + .btn { margin-left: 12px; }
.split { display: flex; flex: 1; }
.dbs { width: 281px; padding: 18px 11px 0 0; border-right: 1px solid #d5dad9; }
.create { width: 100%; height: 25px; border: 1px solid #889397; border-radius: 5px; background: #f9fbfa; font-size: 12px; font-weight: 600; }
.create span { font-weight: 400; margin-right: 4px; font-size: 14px; }
.search { display: flex; align-items: center; height: 37px; margin-top: 10px; padding: 0 9px; gap: 7px; border: 1px solid #889397; border-radius: 5px; }
.search input, .find input { flex: 1; min-width: 0; padding: 0; border: 0; background: none; outline: 0; }
.search input::placeholder { color: #889397; }
.db { display: flex; align-items: center; gap: 12px; height: 30px; margin: 14px 0 4px; font-weight: 600; color: #00a35c; }
.db svg { color: #e8edeb; }
.coll { display: block; height: 34px; padding-left: 32px; line-height: 34px; color: #5b6367; }
.detail { flex: 1; padding: 24px 0 0 20px; }
.detail h2 { padding-left: 20px; font-size: 20px; line-height: 30px; font-weight: 700; }
.stats { display: flex; align-items: center; height: 22px; margin: 5px 0 14px; padding: 0 7px 0 20px; gap: 17px; font-size: 11px; color: #5c6c75; white-space: nowrap; }
.stats b { color: #1c2d38; font-weight: 400; }
.primary { width: 144px; height: 22px; border-radius: 4px; background: #00684a; color: #fff; font-size: 12px; font-weight: 600; }
table { width: calc(100% - 10px); table-layout: fixed; border-collapse: separate; border-spacing: 0; }
th, td { padding: 0 5px; text-align: left; }
th { height: 32px; padding-top: 2px; border-bottom: 2px solid #e8edeb; font-weight: 600; color: #1c2d38; }
td { height: 40px; border-bottom: 1px solid #e8edeb; font-size: 12px; }
td a { color: #016bf8; }
.c1 { width: 206px; } .c2 { width: 145px; } .c3 { width: 210px; } .c4 { width: 232px; }
.c5 { width: 157px; } .c6 { width: 104px; } .c7 { width: 130px; } .c8 { width: auto; }
.scroll { display: flex; flex-direction: column; align-items: center; width: 16px; padding: 4px 0; background: #fcfcfc; }
.scroll i { flex: 0 1 561px; width: 8px; margin: 5px 0 auto; border-radius: 4px; background: #8b8b8b; }
.chat { position: absolute; right: 20px; bottom: 20px; display: grid; place-items: center; width: 48px; height: 48px; border-radius: 24px; background: #00684a; box-shadow: 0 2px 14px #d5d5d5; }

/* Taskbar */
.taskbar { display: grid; grid-template-columns: 576px 1fr auto; align-items: center; height: 48px; padding: 0 19px; border-top: 1px solid #3b3b3b; background: #080808; color: #fff; line-height: 16px; }
.weather { display: flex; align-items: center; gap: 7px; }
.weather span { color: #b0b0b0; }
.dock { display: flex; align-items: center; gap: 12px; }
.find { display: flex; align-items: center; width: 220px; height: 32px; gap: 10px; padding: 0 12px; border: 1px solid #404040; border-radius: 16px; background: #2b2b2b; font-size: 13px; }
.find input::placeholder { color: #c4c4c4; }
.apps { display: flex; gap: 4px; margin-left: -8px; }
.apps button { position: relative; display: grid; place-items: center; width: 40px; height: 40px; border-radius: 5px; }
.apps svg { width: 24px; height: 24px; }
.run::after { content: ""; position: absolute; left: 17px; bottom: 1px; width: 6px; height: 3px; border-radius: 2px; background: #8d8d8d; }
.cur { background: #1b1b1b; box-shadow: inset 0 0 0 1px #2c2c2c; }
.cur::after { left: 12px; width: 16px; background: #4cc2ff; }
.alert { background: #84464b; }
.alert::after { background: #ff99a0; }
.tray { display: flex; align-items: center; }
.net { display: flex; gap: 8px; margin: 0 16px 0 18px; }
.clock { text-align: right; }
```
